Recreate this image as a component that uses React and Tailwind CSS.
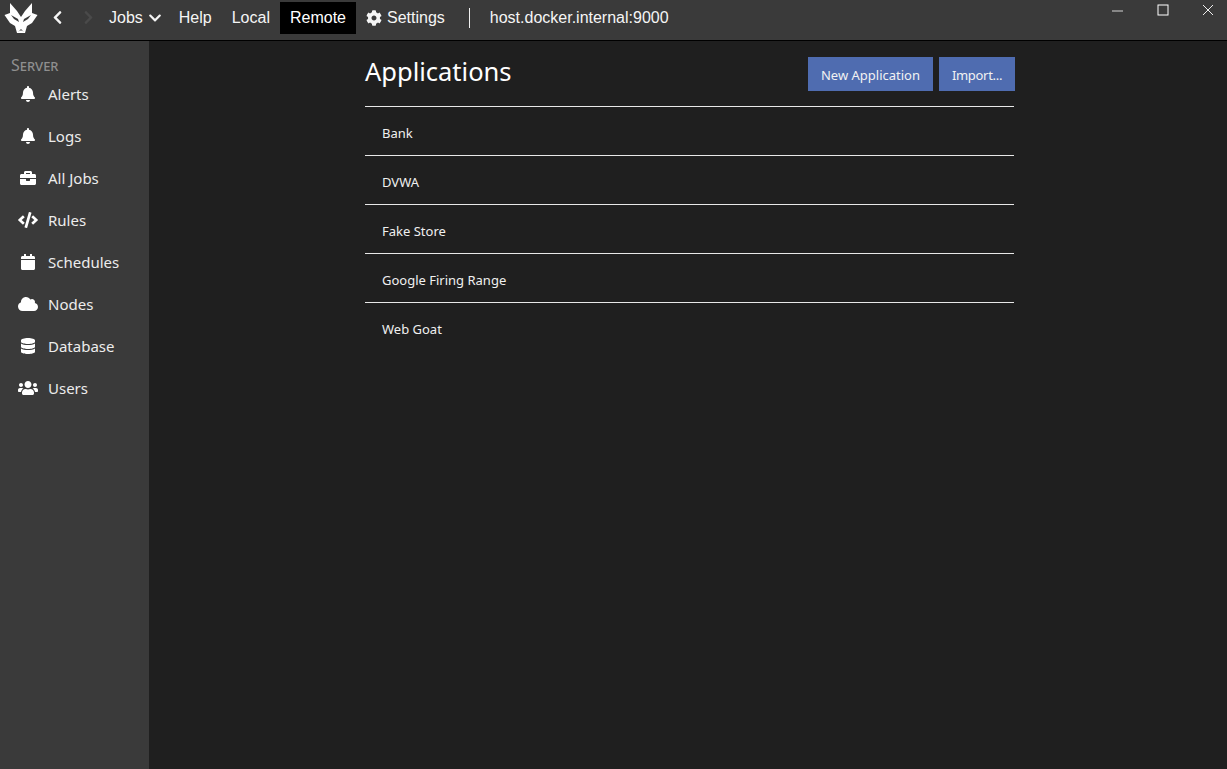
import React from "react";
import { FaBell, FaBriefcase, FaCode, FaCalendar, FaCloud, FaDatabase, FaUsers, FaCog, FaChevronLeft, FaChevronRight, FaChevronDown } from "react-icons/fa";

const seg = "font-['Noto_Sans','Open_Sans',sans-serif]";
const nav = [
  ["Alerts", FaBell, 16],
  ["Logs", FaBell, 16],
  ["All Jobs", FaBriefcase, 16],
  ["Rules", FaCode, 20],
  ["Schedules", FaCalendar, 16],
  ["Nodes", FaCloud, 20],
  ["Database", FaDatabase, 16],
  ["Users", FaUsers, 20],
];
const apps = ["Bank", "DVWA", "Fake Store", "Google Firing Range", "Web Goat"];

function Logo() {
  return (
    <svg width="34" height="34" viewBox="0 0 34 34" className="ml-[4px] shrink-0">
      <path fill="#fff" d="M0.5 13 L6 11 L6 1 L13 9 L17 15 L21 9 L28 1 L28 11 L33.5 13 L28 21 L23 24 L21 31 L13 31 L11 24 L6 21 Z" />
      <path fill="#3a3a3a" d="M7 13 L14 17 L15 20 L10 17 Z M27 13 L20 17 L19 20 L24 17 Z M14 30 L17 27 L20 30 L18 28.5 L16 28.5 Z" />
    </svg>
  );
}

export default function App() {
  return (
    <div className="h-[769px] w-[1227px] overflow-hidden flex flex-col bg-[#1f1f1f] text-white">
      <header className="h-[41px] shrink-0 bg-[#3a3a3a] border-b border-black flex items-start pt-[2px] font-['Liberation_Sans',Arial,sans-serif] text-[16px] text-[#f5f5f5]">
        <Logo />
        <FaChevronLeft size={15} className="ml-[12px] mt-[8px] shrink-0" />
        <FaChevronRight size={15} className="ml-[16px] mt-[8px] shrink-0 text-[#4a4a4a]" />
        <div className="ml-[13px] h-[32px] flex items-center gap-[5px]">
          <span>Jobs</span>
          <FaChevronDown size={14} />
        </div>
        <div className="ml-[6px] h-[32px] flex items-center pl-[11px] pr-[10px]">Help</div>
        <div className="h-[32px] flex items-center pl-[10px] pr-[10px]">Local</div>
        <div className="h-[32px] flex items-center px-[10px] bg-black text-white">Remote</div>
        <div className="h-[32px] flex items-center gap-[5px] px-[10px]">
          <FaCog size={16} />
          <span>Settings</span>
        </div>
        <div className="ml-[14px] mt-[6px] h-[20px] w-px bg-[#f0f0f0]" />
        <div className="ml-[20px] h-[32px] flex items-center">host.docker.internal:9000</div>
        <div className="ml-auto flex mr-[-3px] mt-[1px]">
          <div className="w-[45px] h-[14px] flex items-center justify-center">
            <svg width="12" height="12" viewBox="0 0 12 12"><path d="M0 7h11" stroke="#bbb" strokeWidth="1.2" /></svg>
          </div>
          <div className="w-[45px] h-[14px] flex items-center justify-center">
            <svg width="12" height="12" viewBox="0 0 12 12"><rect x="1" y="1" width="10" height="10" fill="none" stroke="#fff" /></svg>
          </div>
          <div className="w-[45px] h-[14px] flex items-center justify-center">
            <svg width="12" height="12" viewBox="0 0 12 12"><path d="M1 1l10 10M11 1L1 11" stroke="#eee" /></svg>
          </div>
        </div>
      </header>
      <div className="flex-1 flex min-h-0">
        <aside className={`w-[149px] shrink-0 bg-[#3a3a3a] pt-[14px] ${seg}`}>
          <div className="pl-[11px] h-[18px] leading-[20px] text-[16px] text-[#8f8f8f] [font-variant:small-caps]">Server</div>
          <nav>
            {nav.map(([label, Icon, size]) => (
              <div key={label} className="h-[42px] flex items-center text-[15px] text-[#ececec]">
                <div className="w-[48px] pl-[18px] shrink-0 flex">
                  <div className="w-[20px] flex justify-center"><Icon size={size} color="#fff" /></div>
                </div>
                <span>{label}</span>
              </div>
            ))}
          </nav>
        </aside>
        <main className={`flex-1 pl-[216px] pt-[15px] ${seg}`}>
          <div className="w-[649px]">
            <div className="flex items-start justify-between h-[51px] border-b border-[#e8e8e8]">
              <h1 className="text-[25.5px] leading-[30px] text-white">Applications</h1>
              <div className="flex gap-[6px] mr-[-1px] mt-[1px]">
                <button className="h-[34px] w-[125px] pt-[3px] bg-[#4f6cb0] text-[13px] text-[#f2f2f2]">New Application</button>
                <button className="h-[34px] w-[76px] pt-[3px] bg-[#4f6cb0] text-[13px] tracking-[-0.3px] text-[#f2f2f2]">Import...</button>
              </div>
            </div>
            {apps.map((a, i) => (
              <div key={a} className={`h-[49px] flex items-center pl-[17px] pt-[5px] text-[13px] text-[#f0f0f0] ${i < apps.length - 1 ? "border-b border-[#e8e8e8]" : ""}`}>{a}</div>
            ))}
          </div>
        </main>
      </div>
    </div>
  );
}
